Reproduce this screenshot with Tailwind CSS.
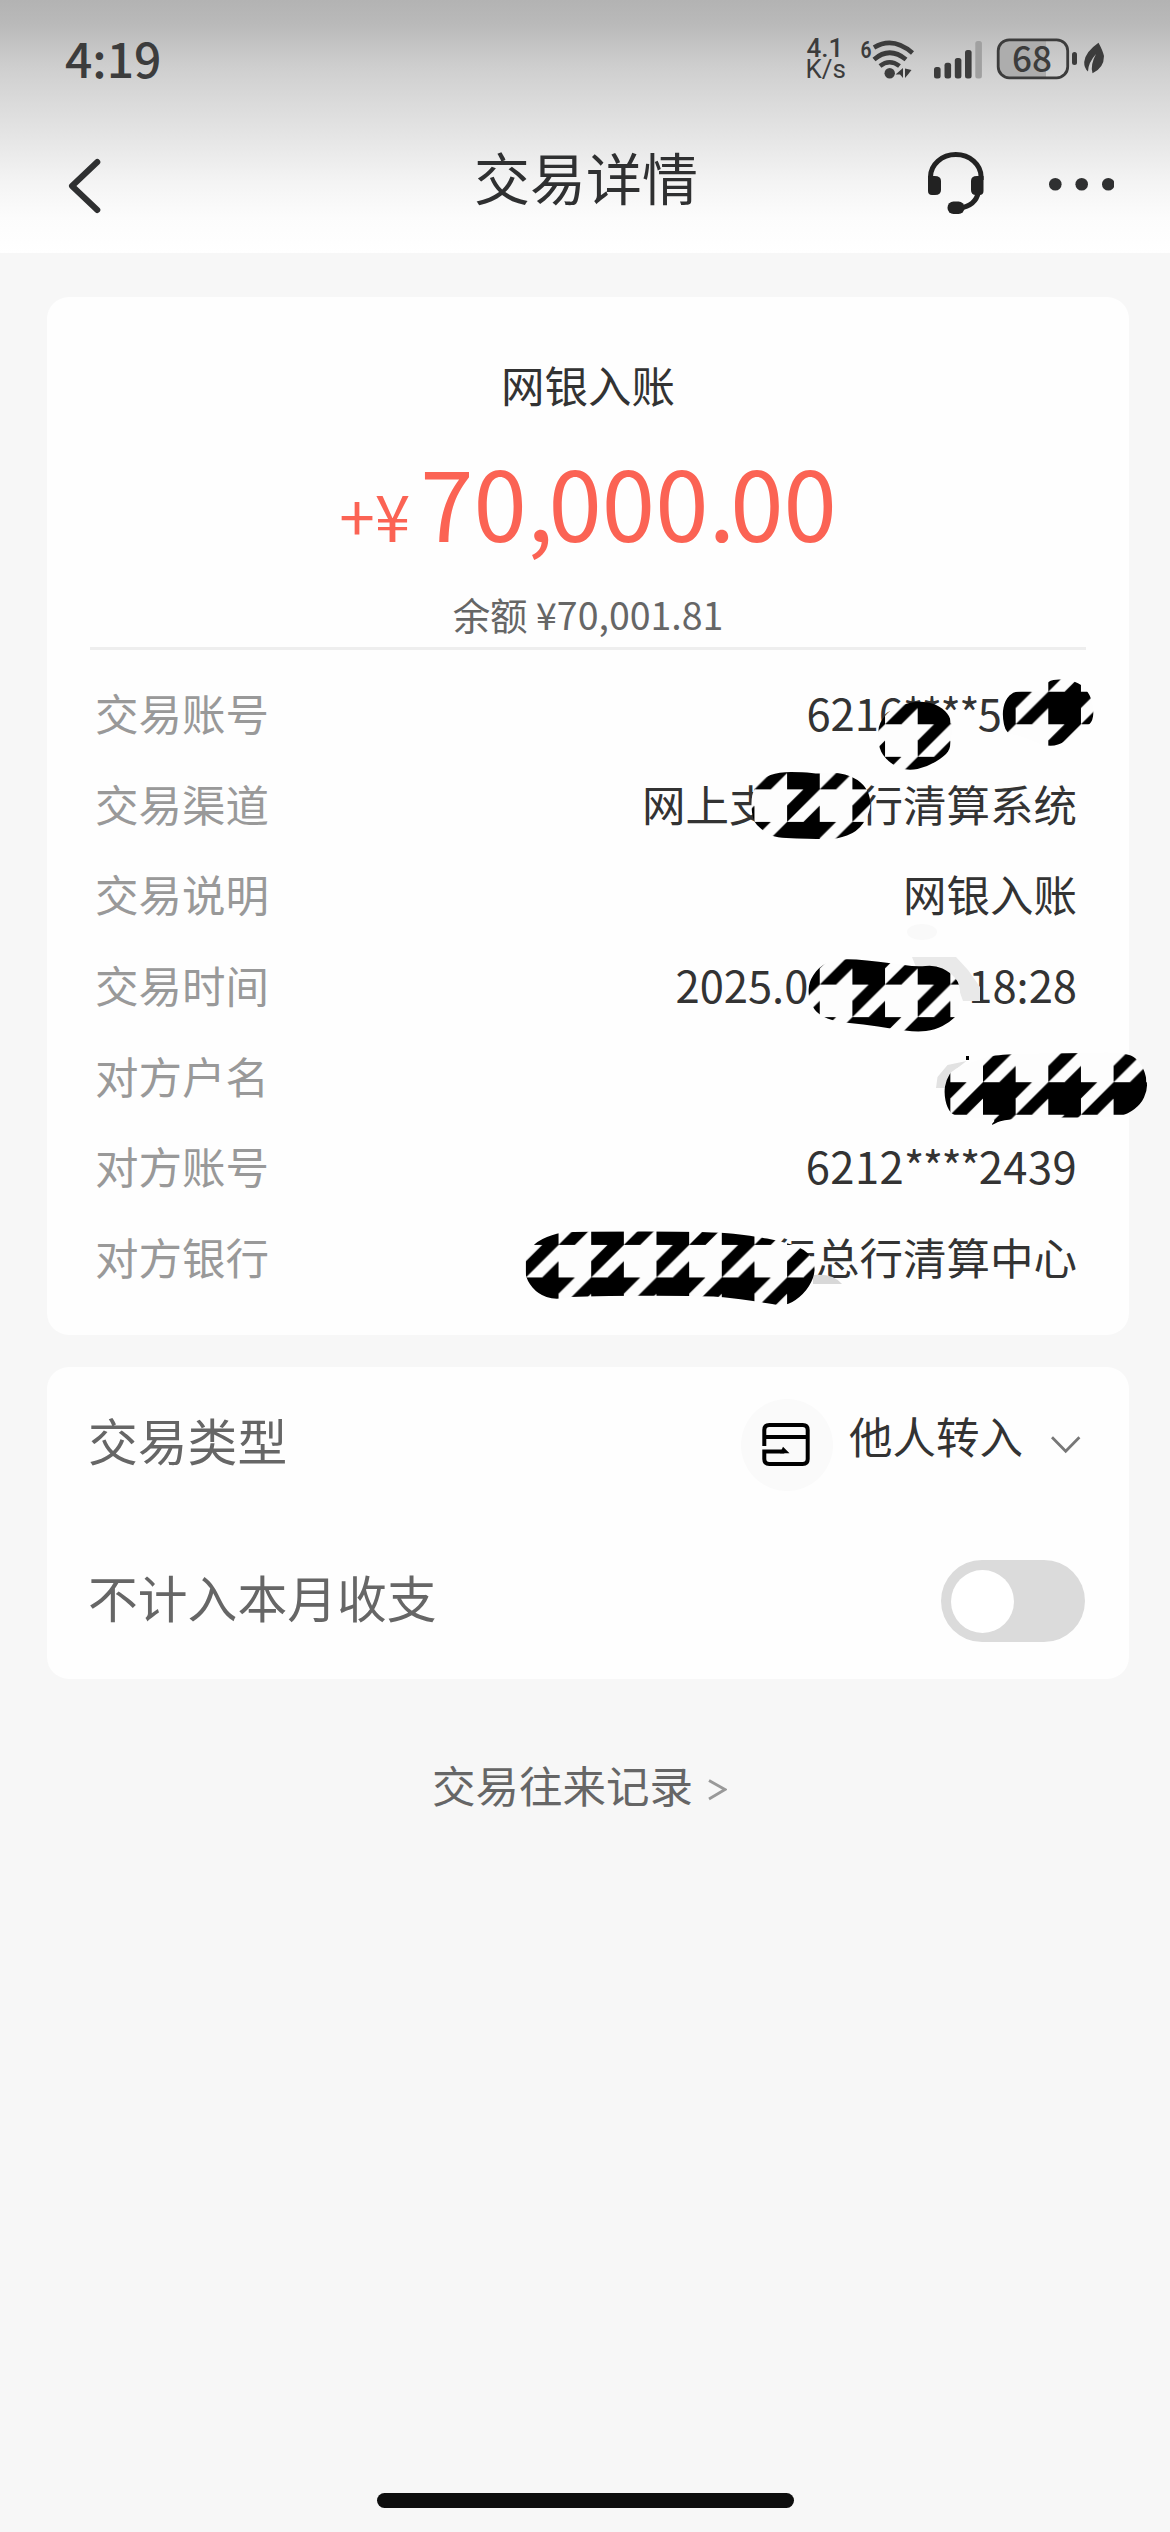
<!DOCTYPE html>
<html lang="zh-CN">
<head>
<meta charset="utf-8">
<title>交易详情</title>
<script src="https://cdn.jsdelivr.net/npm/@tailwindcss/browser@4"></script>
</head>
<body class="bg-[#f7f7f7]">
<div class="relative flex h-[2532px] w-[1170px] flex-col overflow-hidden bg-[#f7f7f7] font-['Noto_Sans_CJK_SC',sans-serif] text-[#333]">

  <header class="flex h-[253px] shrink-0 flex-col bg-linear-[180deg,#b3b3b3_0%,#b9b9b9_9%,#cfcfcf_27%,#dadada_40%,#e5e5e5_54%,#f4f4f4_72%,#fcfcfc_86%,#fff_100%]">
    <div class="flex h-[118px] items-center justify-between pl-[65px] pr-[65px] text-[#3c3c3c]">
      <span class="pb-[5px] text-[48px] font-medium leading-none">4:19</span>
      <div class="flex items-center">
        <div class="flex flex-col pr-[13px] font-[Roboto,sans-serif] text-[26px] font-medium leading-[21px]">
          <span class="pl-px">4.1</span><span class="font-normal">K/s</span>
        </div>
        <svg class="h-[42px] w-[55px] overflow-visible" viewBox="858 37 55 42" fill="none" stroke="currentColor">
          <text x="859.5" y="57" font-family="Roboto" font-size="24" font-weight="600" textLength="11" lengthAdjust="spacingAndGlyphs" fill="currentColor" stroke="none">6</text>
          <g stroke-width="4.6">
            <path d="M873 46.500Q892 35 911.500 52"/>
            <path d="M873 58.500Q888.500 45 905 58.500"/>
            <path d="M879 65Q888.500 57.500 898.500 65"/>
          </g>
          <circle cx="888.700" cy="72.300" r="5.200" fill="currentColor" stroke="none"/>
          <path d="M902 67v10l-3-3.500h-4.500zM904 67.500l6.500 1.500-3.500 4.500-3 3.500z" fill="currentColor" stroke="none"/>
        </svg>
        <svg class="ml-[19px] h-[40px] w-[50px]" viewBox="932 38 50 40" fill="currentColor">
          <rect x="933" y="66" width="6.600" height="11.500" rx="2.500"/>
          <rect x="943.500" y="61.700" width="6.600" height="15.800" rx="2.500"/>
          <rect x="953.800" y="57" width="6.600" height="20.500" rx="2.500"/>
          <rect x="964" y="49" width="6.600" height="28.500" rx="2.500"/>
          <rect x="974.300" y="40" width="6.600" height="37.500" rx="2.500" fill="#a0a0a0"/>
        </svg>
        <svg class="ml-[13px] h-[42px] w-[109px] overflow-visible" viewBox="995 38 109 42" fill="currentColor">
          <path d="M1045 41h-37q-10 0-10 9v18q0 9 10 9h37z" fill="#adadad"/>
          <rect x="997.200" y="39.800" width="69.500" height="38" rx="11" fill="none" stroke="currentColor" stroke-width="2.800"/>
          <text x="1031" y="71.800" text-anchor="middle" font-family="Noto Sans CJK SC" font-size="35" font-weight="500">68</text>
          <rect x="1071" y="52" width="5" height="13" rx="2.500"/>
          <path d="M1097.500 42.700Q1084 52 1083.200 62Q1083 68 1087 71.500Q1087 63 1095 54Q1089 65 1091.500 73.300Q1103 68 1103 56Q1102 51 1097.500 42.700z"/>
        </svg>
      </div>
    </div>
    <div class="flex flex-1 items-start pl-[66px] pr-[56px] text-[#2f3031]">
      <svg class="mt-[38px] h-[60px] w-[40px]" viewBox="66 156 40 60" fill="none" stroke="currentColor" stroke-width="6" stroke-linecap="round" stroke-linejoin="round"><path d="M97.300 162L72 186l25.300 24"/></svg>
      <h1 class="ml-[280px] mt-[30px] w-[400px] text-center text-[56px] font-normal leading-[56px]">交易详情</h1>
      <svg class="ml-auto mt-[32px] h-[68px] w-[194px]" viewBox="920 150 194 68" fill="#222">
        <path d="M930.500 180v-3a25.300 22.500 0 0 1 50.600 0v3" fill="none" stroke="#222" stroke-width="5"/>
        <path d="M928 176h6.500q6.500 0 6.500 5v9q0 5-6 5h-3q-4 0-4-4zM983.500 176h-6.500q-6 0-6 5v9q0 5 5 5h3.500q4 0 4-4z"/>
        <path d="M978.500 192q-3 14-19 16" fill="none" stroke="#222" stroke-width="5"/>
        <rect x="947.500" y="201.500" width="17" height="12.500" rx="6"/>
        <g fill="#2f3031"><circle cx="1055.300" cy="184.300" r="6.300"/><circle cx="1081.700" cy="184.300" r="6.300"/><circle cx="1108.300" cy="184.300" r="6.300"/></g>
      </svg>
    </div>
  </header>

  <main class="flex flex-col pl-[47px] pr-[41px] pt-[44px]">
    <section class="flex h-[1038px] flex-col rounded-[22px] bg-[#fefefe]">
      <div class="flex h-[350px] shrink-0 flex-col items-center">
        <p class="mt-[66px] text-[43.500px] leading-[44px]">网银入账</p>
        <p class="mt-[39px] flex items-baseline text-[#fb6354]">
          <span class="mr-[10px] text-[64px] leading-none">+¥</span><span class="text-[96px] leading-[110px]">70<span class="-tracking-[5px]">,</span>000<span class="-tracking-[5px]">.</span>00</span>
        </p>
        <p class="mt-[38px] text-[37.500px] leading-[40px] text-[#666]">余额 ¥70,001.81</p>
      </div>
      <div class="mx-[43px] h-[3px] shrink-0 bg-[#eee]"></div>
      <dl class="flex flex-col pl-[48px] pr-[52px] pt-[18px] text-[43.500px] leading-[90.700px] [&>div]:flex [&>div]:h-[90.700px] [&>div]:justify-between [&_dt]:text-[#999]">
        <div><dt>交易账号</dt><dd class="pr-[75px]">6216<span class="-tracking-[1.6px]">****</span>5</dd></div>
        <div><dt>交易渠道</dt><dd class="flex gap-[87px]"><span>网上支</span><span>行清算系统</span></dd></div>
        <div><dt>交易说明</dt><dd>网银入账</dd></div>
        <div><dt>交易时间</dt><dd class="flex gap-[160px]"><span>2025.0</span><span>18:28</span></dd></div>
        <div><dt>对方户名</dt><dd></dd></div>
        <div><dt>对方账号</dt><dd class="tracking-[0.4px]">6212<span class="-tracking-[1.6px]">****</span>2439</dd></div>
        <div><dt>对方银行</dt><dd>行总行清算中心</dd></div>
      </dl>
    </section>

    <section class="mt-[32px] flex h-[312px] flex-col rounded-[22px] bg-[#fefefe] pl-[41px] pr-[44px]">
      <div class="flex h-[156px] items-center justify-between">
        <span class="pb-[12px] text-[49.800px] leading-[60px] text-[#666]">交易类型</span>
        <div class="flex items-center">
          <svg class="size-[92px]" viewBox="740 1399 92 92" fill="none" stroke="#000" stroke-width="4">
            <circle cx="786" cy="1445" r="46" fill="#fafafa" stroke="none"/>
            <path d="M763.300 1446v-16q0-5 5-5h33.400q5 0 5 5v29q0 5-5 5h-33.400q-5 0-5-5v-7.500h20M763.300 1437h43.400"/>
            <path d="M779 1453.300h9.500l-6.500-6.500z" fill="#000" stroke="none"/>
          </svg>
          <span class="ml-[16px] pb-[18px] text-[43.500px] leading-[50px]">他人转入</span>
          <svg class="ml-[26px] mr-[2px] h-[22px] w-[34px]" viewBox="1050 1434 34 22" fill="none" stroke="#777" stroke-width="2.800"><path d="M1053 1437.300l13.700 14 13.700-14"/></svg>
        </div>
      </div>
      <div class="flex h-[156px] items-center justify-between">
        <span class="pb-[11px] text-[49.800px] leading-[60px] text-[#666]">不计入本月收支</span>
        <div class="flex h-[82px] w-[144px] items-center rounded-full bg-[#dbdbdb] pl-[10px]"><div class="size-[63px] rounded-full bg-white"></div></div>
      </div>
    </section>

    <a class="mt-[81px] flex items-center justify-center pr-[17px] text-[43.500px] leading-[50px] text-[#666]">交易往来记录
      <svg class="ml-[14px] mt-[10px] h-[24px] w-[20px]" viewBox="707 1780 20 24" fill="none" stroke="#999" stroke-width="2.800"><path d="M709 1782.500l16 9-16 9.500"/></svg>
    </a>
  </main>

  <div class="absolute bottom-[24px] left-[377px] h-[15px] w-[417px] rounded-full bg-[#0e0e0e]"></div>

  <svg class="pointer-events-none absolute left-0 top-0" width="1170" height="2532" viewBox="0 0 1170 2532">
    <defs>
      <pattern id="houndstooth" patternUnits="userSpaceOnUse" width="2" height="2" patternTransform="translate(950.350 659.200) scale(32.650 32.540)">
        <rect width="2" height="2" fill="#fdfdfd"/>
        <path d="M1 1h1v1h-1zM1.500 0H2L1 1V.5zM2 .5V1H1.500zM0 1H.5L0 1.500zM1 1V1.500L.5 2H0z"/>
      </pattern>
    </defs>
    <ellipse cx="922" cy="932" rx="15" ry="8" fill="#f9f9f9"/>
    <path d="M912 957h44l12 13 12 17v14h-17l-5-14-20-21-22 1z" fill="#e9e9e9"/>
    <path d="M936 1088l1.500-11 10-12 19-4-14 11-7 16z" fill="#e2e2e2"/>
    <path d="M813 1275q20-2 29 9h-29z" fill="#d8d8d8"/>
    <path d="M966 1056h3v4h-3z"/>
    <g id="scribbles"></g>
  </svg>
</div>
<script>
  // Marker strokes: outline points of each scribble, smoothed through edge midpoints.
  const strokes = [
    [[879,723],[890,710],[903,704],[920,701],[936,704],[948,713],[952,724],[951,747],[945,756],[927,767],[908,771],[892,765],[880,752],[878,737]],
    [[1002,715],[1005,700],[1014,691],[1030,691],[1046,690],[1047,681],[1060,679],[1079,682],[1090,694],[1094,710],[1092,723],[1083,728],[1068,741],[1048,748],[1020,735],[1006,734]],
    [[751,793],[762,778],[779,772],[803,772],[820,774],[836,772],[854,777],[866,787],[871,800],[869,815],[857,832],[837,839],[820,839],[774,838],[762,830],[752,820]],
    [[808,993],[810,979],[822,964],[842,958],[892,963],[916,967],[935,965],[950,972],[961,985],[959,1013],[950,1022],[935,1030],[917,1032],[893,1029],[863,1024],[836,1022],[819,1015],[811,1005]],
    [[944,1093],[946,1080],[953,1069],[978,1060],[998,1054],[1080,1053],[1128,1052],[1142,1064],[1147,1080],[1147,1091],[1141,1104],[1128,1114],[1113,1117.5],[1006,1117.5],[989,1127],[998,1117.5],[955,1117.5],[947,1108]],
    [[524,1267],[527,1253],[537,1241],[557,1233],[575,1231.500],[714,1231.500],[753,1236],[781,1241],[805,1249],[815,1263],[814,1278],[804,1294],[787,1306],[772,1304],[741,1299],[706,1295.500],[572,1296],[555,1300],[538,1294],[527,1281]],
  ];
  const mid = (a, b) => [(a[0] + b[0]) / 2, (a[1] + b[1]) / 2];
  const layer = document.getElementById('scribbles');
  for (const pts of strokes) {
    let d = 'M' + mid(pts[pts.length - 1], pts[0]);
    pts.forEach((p, i) => { d += 'Q' + p + ' ' + mid(p, pts[(i + 1) % pts.length]); });
    const path = document.createElementNS('http://www.w3.org/2000/svg', 'path');
    path.setAttribute('d', d + 'Z');
    path.setAttribute('fill', 'url(#houndstooth)');
    layer.appendChild(path);
  }
</script>
</body>
</html>
